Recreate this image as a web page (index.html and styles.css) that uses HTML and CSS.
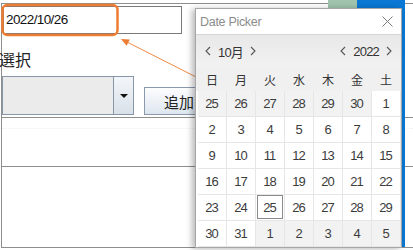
FILE: index.html
```html
<!DOCTYPE html>
<html lang="ja">
<head>
    <meta charset="UTF-8">
    <meta name="viewport" content="width=device-width, initial-scale=1.0">
    <title>Date Picker</title>
    <link rel="stylesheet" href="styles.css">
</head>
<body>
    <div class="screen">
        <div class="window">
            <div class="date-field">2022/10/26</div>
            <div class="label">選択</div>
            <div class="combo-row">
                <div class="combo">
                    <div class="combo-value"></div>
                    <div class="combo-btn"><span class="tri"></span></div>
                </div>
                <button class="btn">追加</button>
            </div>
            <div class="list">
                <div class="list-row"><div class="dots"></div></div>
            </div>
        </div>

        <!-- desktop behind the popup -->
        <div class="desk-green"></div>
        <div class="desk-blue"></div>

        <!-- annotation -->
        <svg class="callout" width="413" height="250" viewBox="0 0 413 250">
            <rect x="2.5" y="5" width="115" height="30" rx="5" fill="none" stroke="#ed7d31" stroke-width="2.5"/>
            <line x1="127" y1="42" x2="200" y2="79" stroke="#ef8a48" stroke-width="1"/>
            <polygon points="121,39 129.8,39.5 126.6,45.7" fill="#ed7d31"/>
        </svg>

        <div class="picker">
            <div class="picker-title">
                <span>Date Picker</span>
                <svg width="11" height="11" viewBox="0 0 11 11"><path d="M0.5 0.5L10.5 10.5M10.5 0.5L0.5 10.5" stroke="#7a7a7a" stroke-width="1" fill="none"/></svg>
            </div>
            <div class="picker-nav">
                <div class="nav-group">
                    <svg class="chev" width="6" height="10" viewBox="0 0 6 10"><polyline points="5,1 1,5 5,9"/></svg>
                    <span>10月</span>
                    <svg class="chev" width="6" height="10" viewBox="0 0 6 10"><polyline points="1,1 5,5 1,9"/></svg>
                </div>
                <div class="nav-group">
                    <svg class="chev" width="6" height="10" viewBox="0 0 6 10"><polyline points="5,1 1,5 5,9"/></svg>
                    <span>2022</span>
                    <svg class="chev" width="6" height="10" viewBox="0 0 6 10"><polyline points="1,1 5,5 1,9"/></svg>
                </div>
            </div>
            <div class="week-head">
                <span>日</span><span>月</span><span>火</span><span>水</span><span>木</span><span>金</span><span>土</span>
            </div>
            <div class="days">
                <span class="out">25</span><span class="out">26</span><span class="out">27</span><span class="out">28</span><span class="out">29</span><span class="out">30</span><span>1</span>
                <span>2</span><span>3</span><span>4</span><span>5</span><span>6</span><span>7</span><span>8</span>
                <span>9</span><span>10</span><span>11</span><span>12</span><span>13</span><span>14</span><span>15</span>
                <span>16</span><span>17</span><span>18</span><span>19</span><span>20</span><span>21</span><span>22</span>
                <span>23</span><span>24</span><span class="sel">25</span><span>26</span><span>27</span><span>28</span><span>29</span>
                <span>30</span><span>31</span><span class="out">1</span><span class="out">2</span><span class="out">3</span><span class="out">4</span><span class="out">5</span>
            </div>
        </div>
    </div>
</body>
</html>
```

FILE: styles.css
```css
body {
    margin: 0;
    background: #fff;
    font-family: "Liberation Sans", "Noto Sans CJK JP", sans-serif;
    color: #222;
}
.screen {
    position: relative;
    width: 413px;
    height: 250px;
    overflow: hidden;
    background: #fff;
}

/* main window */
.window {
    margin: 3px 0 0 1px;
    width: 412px;
    height: 245px;
    box-sizing: border-box;
    border-top: 1px solid #8e8e8e;
    border-left: 1px solid #8e8e8e;
    border-bottom: 1px solid #8e8e8e;
}
.date-field {
    margin: 2px 0 0 1px;
    width: 179px;
    height: 28px;
    box-sizing: border-box;
    border: 1px solid #7a7a7a;
    padding-left: 2px;
    font-size: 13.5px;
    letter-spacing: -0.6px;
    line-height: 26px;
    color: #111;
}
.label {
    margin: 14px 0 0 -3px;
    height: 22px;
    font-family: "Noto Sans CJK JP", sans-serif;
    font-size: 16px;
    line-height: 22px;
    color: #222;
}
.combo-row {
    display: flex;
    align-items: flex-end;
    gap: 10px;
    margin-top: 6px;
}
.combo {
    display: flex;
    width: 132px;
    height: 39px;
    box-sizing: border-box;
    border: 1px solid #8796a8;
}
.combo-value {
    flex: 1;
    background: #ebebeb;
}
.combo-btn {
    width: 19px;
    border-left: 1px solid #8796a8;
    background: linear-gradient(#f3f6f9, #d8e0e9);
    display: flex;
    align-items: center;
    justify-content: center;
}
.tri {
    width: 0;
    height: 0;
    border-left: 4px solid transparent;
    border-right: 4px solid transparent;
    border-top: 4px solid #111;
}
.btn {
    width: 60px;
    height: 28px;
    padding: 0 0 0 19px;
    text-align: left;
    border: 1px solid #8a99ab;
    background: linear-gradient(#fdfdfe, #dde6ef);
    font-family: "Noto Sans CJK JP", sans-serif;
    font-size: 15px;
    color: #222;
}
.list {
    margin-top: 2px;
    border-top: 1px solid #8e8e8e;
}
.list-row {
    height: 38px;
    border-bottom: 1px solid #8e8e8e;
}
.dots {
    margin-top: 10px;
    border-top: 1px dotted #efefef;
}

/* desktop pieces */
.desk-green {
    position: absolute;
    left: 328px;
    top: 0;
    width: 29px;
    height: 8px;
    background: #9fc3ad;
}
.desk-blue {
    position: absolute;
    left: 357px;
    top: 0;
    width: 48px;
    height: 247px;
    background: #0a78d4;
}
.callout {
    position: absolute;
    left: 0;
    top: 0;
    pointer-events: none;
}

/* popup */
.picker {
    position: absolute;
    left: 195px;
    top: 8px;
    width: 207px;
    height: 240px;
    box-sizing: border-box;
    border: 1px solid #a7a7a7;
    background: #fff;
    box-shadow: -3px 1px 6px rgba(0,0,0,0.28);
    display: flex;
    flex-direction: column;
}
.picker-title {
    height: 26px;
    flex: none;
    box-sizing: border-box;
    border-bottom: 1px solid #d6d6d6;
    display: flex;
    align-items: center;
    justify-content: space-between;
    padding: 0 8px 0 4px;
    font-size: 12.5px;
    letter-spacing: -0.3px;
    color: #8c8c8c;
}
.picker-nav {
    height: 32px;
    flex: none;
    display: flex;
    align-items: center;
    justify-content: space-between;
    padding: 0 9px;
    background: linear-gradient(#e8e8e8, #f2f2f2);
    font-size: 13px;
    color: #333;
}
.nav-group {
    display: flex;
    align-items: center;
    gap: 7px;
}
.nav-group span {
    letter-spacing: -0.8px;
}
.chev polyline {
    fill: none;
    stroke: #555;
    stroke-width: 1.1;
}
.week-head {
    height: 24px;
    flex: none;
    display: grid;
    grid-template-columns: repeat(7, 29px);
    padding-left: 2px;
    align-items: center;
    background: #f0f0f0;
    font-family: "Noto Sans CJK JP", sans-serif;
    font-size: 12px;
    color: #333;
}
.week-head span {
    text-align: center;
    padding-right: 1px;
}
.days {
    display: grid;
    grid-template-columns: repeat(7, 29px);
    grid-auto-rows: 26px;
    padding-left: 2px;
}
.days span {
    position: relative;
    display: flex;
    align-items: center;
    justify-content: center;
    border-right: 1px solid #e6e6e6;
    border-bottom: 1px solid #e6e6e6;
    font-size: 13px;
    letter-spacing: -0.8px;
    text-indent: -0.8px;
    color: #3c3c3c;
}
.days .out { background: #f2f2f2; }
.days .sel::after {
    content: "";
    position: absolute;
    left: 1px;
    top: 0;
    right: 1px;
    bottom: 1px;
    border: 1px solid #8a8a8a;
}
```
